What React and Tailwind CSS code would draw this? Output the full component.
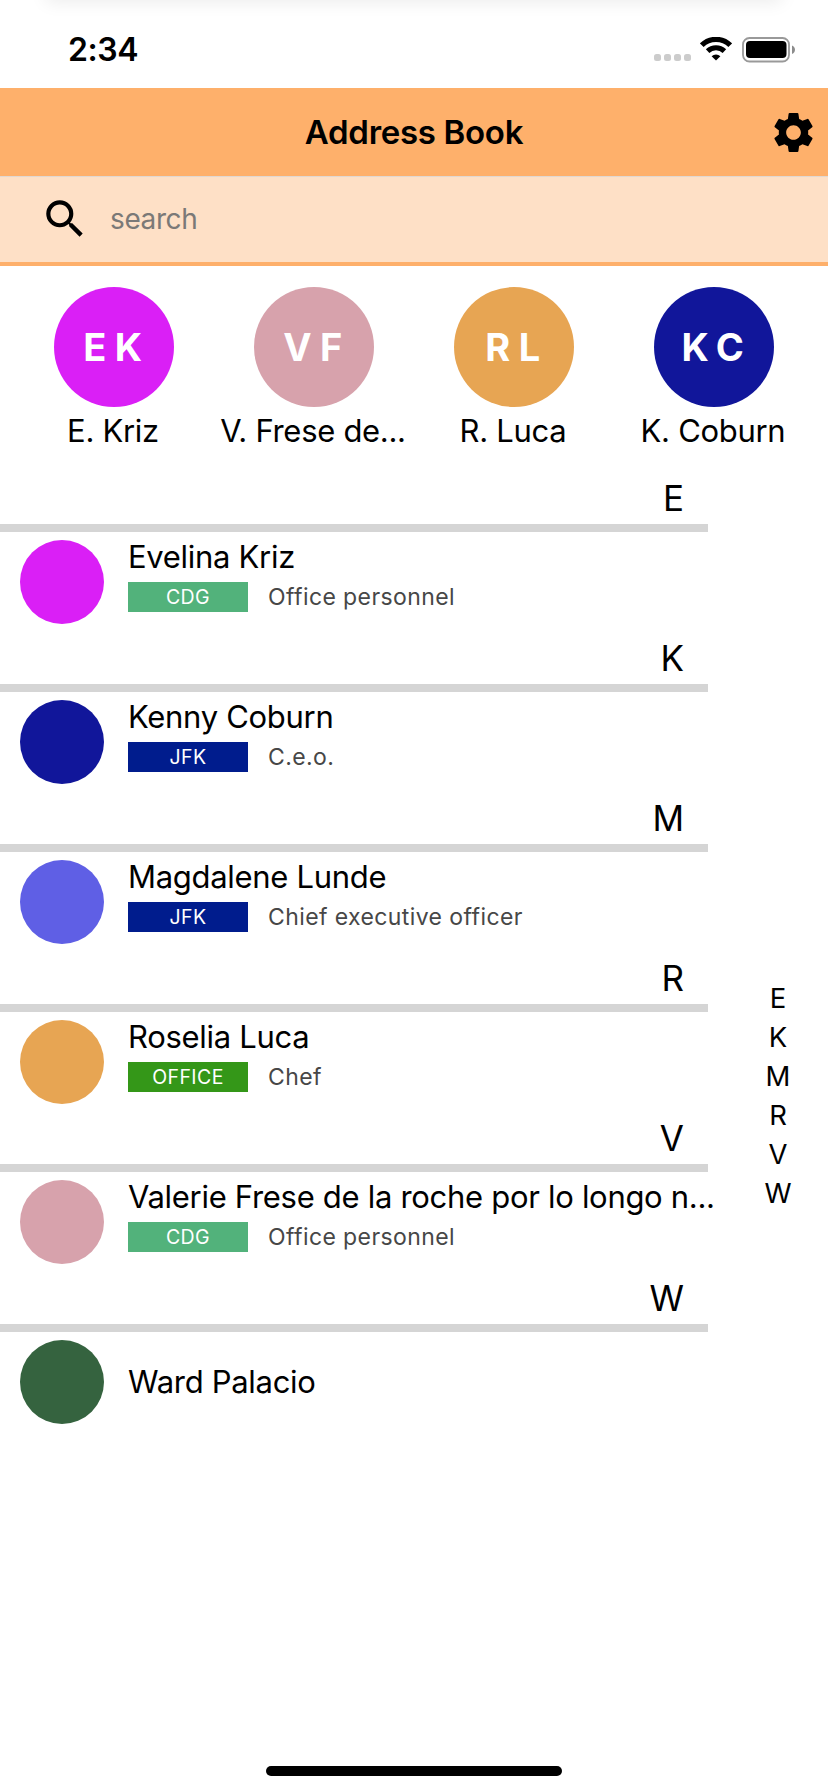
import { MdSearch, MdSettings } from "react-icons/md";

const favourites = [
  { initials: "EK", name: "E. Kriz", color: "bg-[#da1ff6]" },
  { initials: "VF", name: "V. Frese de...", color: "bg-[#d7a2ac]" },
  { initials: "RL", name: "R. Luca", color: "bg-[#e7a553]" },
  { initials: "KC", name: "K. Coburn", color: "bg-[#11169a]" },
];

const contacts = [
  { letter: "E", name: "Evelina Kriz", color: "bg-[#da1ff6]", tag: "CDG", tagColor: "bg-[#52b27b]", role: "Office personnel" },
  { letter: "K", name: "Kenny Coburn", color: "bg-[#11169a]", tag: "JFK", tagColor: "bg-[#001c8d]", role: "C.e.o." },
  { letter: "M", name: "Magdalene Lunde", color: "bg-[#5f5fe5]", tag: "JFK", tagColor: "bg-[#001c8d]", role: "Chief executive officer" },
  { letter: "R", name: "Roselia Luca", color: "bg-[#e7a553]", tag: "OFFICE", tagColor: "bg-[#349718]", role: "Chef" },
  { letter: "V", name: "Valerie Frese de la roche por lo longo n...", color: "bg-[#d7a2ac]", tag: "CDG", tagColor: "bg-[#52b27b]", role: "Office personnel" },
  { letter: "W", name: "Ward Palacio", color: "bg-[#35633f]" },
];

function WifiIcon() {
  return (
    <svg width="32" height="24" viewBox="0 0 32 24" fill="none">
      <path d="M1.8 8.2a20.2 20.2 0 0 1 28.4 0" stroke="#000" strokeWidth="5.2" />
      <path d="M7.6 14.1a12 12 0 0 1 16.8 0" stroke="#000" strokeWidth="5" />
      <path d="M16 23.6l-4.4-4.4a6.4 6.4 0 0 1 8.8 0z" fill="#000" />
    </svg>
  );
}

function BatteryIcon() {
  return (
    <svg width="54" height="26" viewBox="0 0 54 26" fill="none">
      <rect x="1" y="1" width="46" height="23.5" rx="6.5" stroke="#999" strokeWidth="1.8" />
      <rect x="4" y="4" width="40.5" height="17" rx="4" fill="#000" />
      <path d="M50 8.5c4 1.2 4 7.3 0 8.5z" fill="#8c8c8c" />
    </svg>
  );
}

function StatusBar() {
  return (
    <div className="relative flex h-[88px] items-center justify-between overflow-hidden pr-[32px] pl-[68px]">
      <div className="absolute inset-x-[48px] -top-10 h-10 shadow-[0_0_18px_2px_rgba(0,0,0,0.08)]" />
      <span className="pt-[11px] text-[32px] leading-none font-semibold tracking-[-0.4px]">2:34</span>
      <div className="flex items-end pt-[11px]">
        <div className="mr-[9px] mb-[2px] flex gap-[3px]">
          <i className="size-[7px] rounded-[2.5px] bg-[#ccc]" />
          <i className="size-[7px] rounded-[2.5px] bg-[#ccc]" />
          <i className="size-[7px] rounded-[2.5px] bg-[#ccc]" />
          <i className="size-[7px] rounded-[2.5px] bg-[#ccc]" />
        </div>
        <div className="mr-[10px] mb-[2px]"><WifiIcon /></div>
        <BatteryIcon />
      </div>
    </div>
  );
}

function Contact({ person }) {
  return (
    <section className="w-[728px]">
      <h2 className="flex h-[68px] w-[708px] items-center justify-end border-b-8 border-[#d5d5d5] pt-[9px] pr-6 text-[35px] leading-none">
        {person.letter}
      </h2>
      <div className="flex h-[92px] items-center gap-6 pt-2 pl-5">
        <div className={"size-[84px] shrink-0 rounded-full " + person.color} />
        <div className={person.tag ? "h-[84px]" : ""}>
          <div className="text-[31px] leading-[34px] tracking-[-0.3px] whitespace-nowrap">{person.name}</div>
          {person.tag && (
            <div className="mt-2 flex items-center gap-5">
              <span className={"flex h-[30px] w-[120px] items-center justify-center pt-px text-[19.5px] tracking-[0.4px] text-white " + person.tagColor}>
                {person.tag}
              </span>
              <span className="text-[23px] leading-[30px] tracking-[0.4px] text-[#474747]">{person.role}</span>
            </div>
          )}
        </div>
      </div>
    </section>
  );
}

export default function App() {
  return (
    <div className="flex h-[1792px] w-[828px] flex-col overflow-hidden bg-white font-['Inter',sans-serif] text-black">
      <StatusBar />
      <header className="grid h-[89px] grid-cols-[1fr_auto_1fr] items-center border-b border-[#e0d8d2] bg-[#feb06b] pr-[10px]">
        <h1 className="col-start-2 pl-[10px] text-[33px] leading-none font-semibold tracking-[-0.3px]">Address Book</h1>
        <MdSettings className="size-[49px] justify-self-end" />
      </header>
      <div className="flex h-[89px] items-center border-b-4 border-[#feb06b] bg-[#fee0c6] pb-px pl-10">
        <MdSearch className="size-[50px]" />
        <span className="ml-5 text-[28px] leading-none tracking-[-0.4px] text-[#7b7977]">search</span>
      </div>
      <div className="mb-[9px] grid grid-cols-4 px-[14px] pt-[21px]">
        {favourites.map((f) => (
          <div key={f.initials} className="flex flex-col items-center">
            <div className={"flex size-[120px] items-center justify-center rounded-full text-[38px] font-bold tracking-[8.5px] text-white " + f.color}>
              <span className="ml-[6px]">{f.initials}</span>
            </div>
            <div className="mr-[2px] text-[31px] leading-[48px] tracking-[-0.3px] whitespace-nowrap">{f.name}</div>
          </div>
        ))}
      </div>
      <main className="flex min-h-0 flex-1">
        <div className="w-[728px]">
          {contacts.map((c) => (
            <Contact key={c.letter} person={c} />
          ))}
        </div>
        <nav className="flex w-[100px] flex-col items-center justify-center pt-px text-[27.5px] leading-[39px]">
          {contacts.map((c) => (
            <span key={c.letter}>{c.letter}</span>
          ))}
        </nav>
      </main>
      <footer className="flex h-[66px] shrink-0 items-end justify-center pb-4">
        <div className="h-[10px] w-[296px] rounded-full bg-black" />
      </footer>
    </div>
  );
}
